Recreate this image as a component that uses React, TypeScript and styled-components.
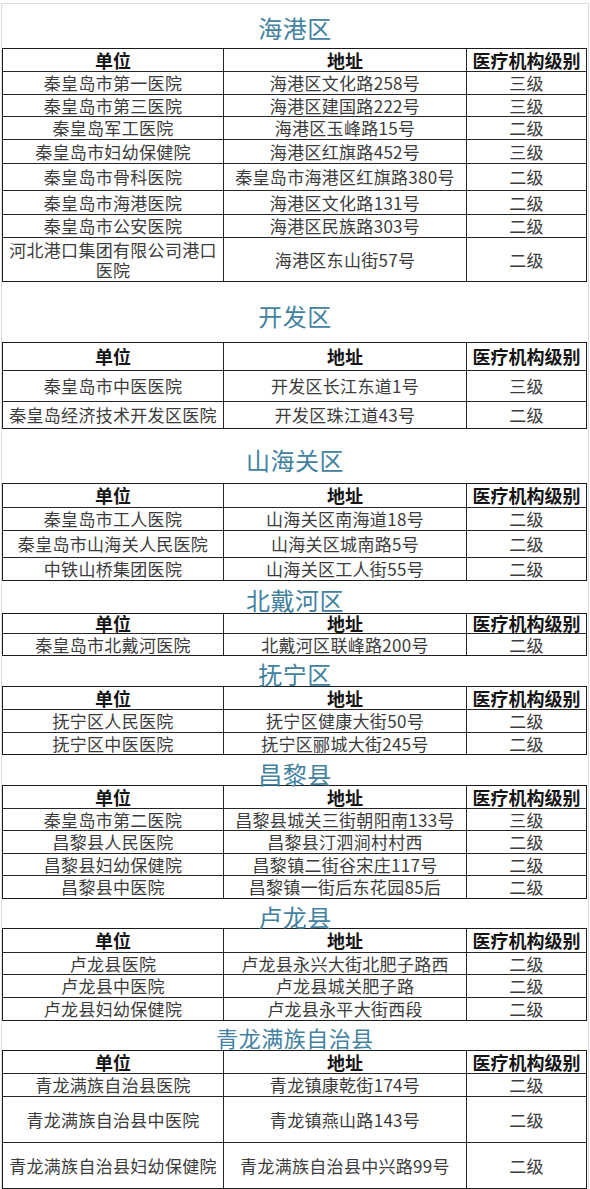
import styled, { createGlobalStyle } from 'styled-components';

type Row = { cells: string[]; h: number };
type Section = { name: string; titleH: number; titlePt: number; titleSize?: number; headH: number; rows: Row[] };

// heights are measured line-to-line in the source sheet
const sections: Section[] = [
  {
    name: '海港区',
    titleH: 44,
    titlePt: 4,
    headH: 22,
    rows: [
      { cells: ['秦皇岛市第一医院', '海港区文化路258号', '三级'], h: 23 },
      { cells: ['秦皇岛市第三医院', '海港区建国路222号', '三级'], h: 22 },
      { cells: ['秦皇岛军工医院', '海港区玉峰路15号', '二级'], h: 23 },
      { cells: ['秦皇岛市妇幼保健院', '海港区红旗路452号', '三级'], h: 24 },
      { cells: ['秦皇岛市骨科医院', '秦皇岛市海港区红旗路380号', '二级'], h: 27 },
      { cells: ['秦皇岛市海港医院', '海港区文化路131号', '二级'], h: 24 },
      { cells: ['秦皇岛市公安医院', '海港区民族路303号', '二级'], h: 23 },
      { cells: ['河北港口集团有限公司港口\n医院', '海港区东山街57号', '二级'], h: 44 },
    ],
  },
  {
    name: '开发区',
    titleH: 60,
    titlePt: 8,
    headH: 27,
    rows: [
      { cells: ['秦皇岛市中医医院', '开发区长江东道1号', '三级'], h: 31 },
      { cells: ['秦皇岛经济技术开发区医院', '开发区珠江道43号', '二级'], h: 27 },
    ],
  },
  {
    name: '山海关区',
    titleH: 54,
    titlePt: 8,
    headH: 23,
    rows: [
      { cells: ['秦皇岛市工人医院', '山海关区南海道18号', '二级'], h: 23 },
      { cells: ['秦皇岛市山海关人民医院', '山海关区城南路5号', '二级'], h: 27 },
      { cells: ['中铁山桥集团医院', '山海关区工人街55号', '二级'], h: 23 },
    ],
  },
  {
    name: '北戴河区',
    titleH: 32,
    titlePt: 6,
    headH: 19,
    rows: [{ cells: ['秦皇岛市北戴河医院', '北戴河区联峰路200号', '二级'], h: 22 }],
  },
  {
    name: '抚宁区',
    titleH: 30,
    titlePt: 6,
    headH: 22,
    rows: [
      { cells: ['抚宁区人民医院', '抚宁区健康大街50号', '二级'], h: 23 },
      { cells: ['抚宁区中医医院', '抚宁区郦城大街245号', '二级'], h: 22 },
    ],
  },
  {
    name: '昌黎县',
    titleH: 30,
    titlePt: 8,
    headH: 22,
    rows: [
      { cells: ['秦皇岛市第二医院', '昌黎县城关三街朝阳南133号', '三级'], h: 22 },
      { cells: ['昌黎县人民医院', '昌黎县汀泗涧村村西', '二级'], h: 23 },
      { cells: ['昌黎县妇幼保健院', '昌黎镇二街谷宋庄117号', '二级'], h: 22 },
      { cells: ['昌黎县中医院', '昌黎镇一街后东花园85后', '二级'], h: 23 },
    ],
  },
  {
    name: '卢龙县',
    titleH: 29,
    titlePt: 7,
    headH: 23,
    rows: [
      { cells: ['卢龙县医院', '卢龙县永兴大街北肥子路西', '二级'], h: 22 },
      { cells: ['卢龙县中医院', '卢龙县城关肥子路', '二级'], h: 23 },
      { cells: ['卢龙县妇幼保健院', '卢龙县永平大街西段', '二级'], h: 23 },
    ],
  },
  {
    name: '青龙满族自治县',
    titleH: 29,
    titlePt: 3,
    titleSize: 22,
    headH: 22,
    rows: [
      { cells: ['青龙满族自治县医院', '青龙镇康乾街174号', '二级'], h: 23 },
      { cells: ['青龙满族自治县中医院', '青龙镇燕山路143号', '二级'], h: 46 },
      { cells: ['青龙满族自治县妇幼保健院', '青龙满族自治县中兴路99号', '二级'], h: 46 },
    ],
  },
];

const headers = ['单位', '地址', '医疗机构级别'];

const App = () => {
  return (
    <>
      <GlobalStyle />
      <Page>
        {sections.map((s) => (
          <section key={s.name}>
            <Title $h={s.titleH} $pt={s.titlePt} $size={s.titleSize ?? 24}>
              {s.name}
            </Title>
            <Sheet>
              <SheetRow $h={s.headH}>
                {headers.map((h) => (
                  <HeadCell key={h}>{h}</HeadCell>
                ))}
              </SheetRow>
              {s.rows.map((r) => (
                <SheetRow key={r.cells[0]} $h={r.h}>
                  {r.cells.map((c, i) => (
                    <Cell key={i}>{c}</Cell>
                  ))}
                </SheetRow>
              ))}
            </Sheet>
          </section>
        ))}
      </Page>
    </>
  );
};

export default App;

const GlobalStyle = createGlobalStyle`
  html, body {
    margin: 0;
    padding: 0;
    background: #ffffff;
  }
  body {
    font-family: "Noto Sans CJK SC", "Noto Sans", sans-serif;
  }
`;

const Page = styled.div`
  box-sizing: border-box;
  width: 588px;
  height: 1186px;
  margin: 3px 0 0 1px;
  border: 1px solid #dcdcdc;
  border-bottom: none;
  overflow: hidden;
`;

const Title = styled.div<{ $h: number; $pt: number; $size: number }>`
  box-sizing: border-box;
  height: ${(p) => p.$h}px;
  padding-top: ${(p) => p.$pt}px;
  line-height: ${(p) => p.$h - p.$pt}px;
  text-align: center;
  font-size: ${(p) => p.$size}px;
  color: #4282a0;
  letter-spacing: 0.5px;
`;

const Sheet = styled.div`
  width: 585px;
  box-sizing: border-box;
  border: 1px solid #1c1c1c;
`;

const SheetRow = styled.div<{ $h: number }>`
  display: grid;
  grid-template-columns: 220px 243px 1fr;
  box-sizing: border-box;
  height: ${(p) => p.$h}px;
  overflow: hidden;

  & + & {
    border-top: 1px solid #262626;
  }
`;

const Cell = styled.div`
  display: flex;
  align-items: center;
  justify-content: center;
  padding: 0 1px;
  text-align: center;
  font-size: 17px;
  line-height: 20px;
  color: #3c3c3c;
  white-space: pre-line;
  letter-spacing: 0.3px;

  & + & {
    border-left: 1px solid #262626;
  }
`;

const HeadCell = styled(Cell)`
  font-size: 18px;
  line-height: 17px;
  font-weight: 700;
  color: #151515;
  letter-spacing: 0;
`;
